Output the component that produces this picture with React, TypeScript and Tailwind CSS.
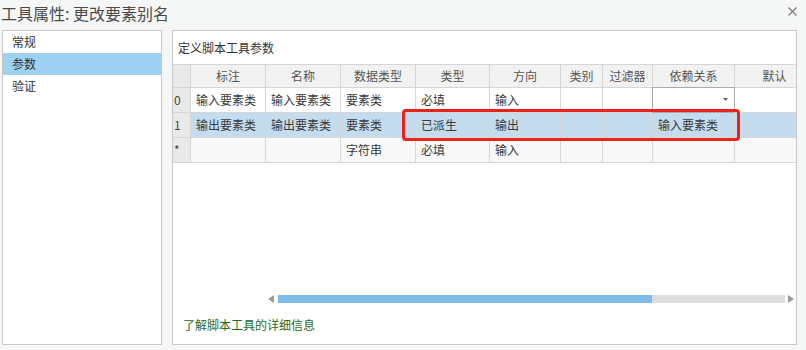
import React from 'react'

const font = "font-['Microsoft_YaHei','Noto_Sans_CJK_SC',sans-serif]"

const columns = [
  { label: '', w: 'w-[18px]' },
  { label: '标注', w: 'w-[75px]' },
  { label: '名称', w: 'w-[75px]' },
  { label: '数据类型', w: 'w-[75px]' },
  { label: '类型', w: 'w-[74px]' },
  { label: '方向', w: 'w-[71px]' },
  { label: '类别', w: 'w-[42px]' },
  { label: '过滤器', w: 'w-[50px]' },
  { label: '依赖关系', w: 'w-[82px]' },
  { label: '默认', w: 'w-[80px]' },
]

const rows = [
  { num: '0', cells: ['输入要素类', '输入要素类', '要素类', '必填', '输入', '', '', '', ''], bg: 'bg-white', dropdown: true },
  { num: '1', cells: ['输出要素类', '输出要素类', '要素类', '已派生', '输出', '', '', '输入要素类', ''], bg: 'bg-[#c5dcef]' },
  { num: '*', cells: ['', '', '字符串', '必填', '输入', '', '', '', ''], bg: 'bg-[#f8f8f8]' },
]

const HeaderRow: React.FC = () => (
  <div className="flex h-[24px] border-t border-[#d6d6d6]">
    {columns.map((col, i) => (
      <div
        key={i}
        className={`${col.w} shrink-0 border-r border-b border-[#d6d6d6] flex items-center justify-center text-[12px] text-[#555] ${i === 0 ? 'bg-[#e9e9e9]' : 'bg-[#f2f2f2]'}`}
      >
        {col.label}
      </div>
    ))}
  </div>
)

const DataRow: React.FC<{ row: (typeof rows)[number] }> = ({ row }) => (
  <div className="flex h-[25px]">
    <div className="w-[18px] shrink-0 border-r border-b border-[#d6d6d6] bg-[#e9e9e9] flex items-center pl-[1px] text-[12px] text-[#444]">
      {row.num}
    </div>
    {row.cells.map((text, i) => {
      const col = columns[i + 1]
      if (row.dropdown && i === 7) {
        return (
          <div key={i} className={`${col.w} shrink-0 border-b border-r border-[#d6d6d6] bg-white relative`}>
            <div className="absolute inset-[-1px] border border-[#ababab] bg-white">
              <svg className="absolute right-[6px] top-[10px]" width="5" height="3" viewBox="0 0 5 3">
                <path d="M0 0h5L2.5 3z" fill="#666" />
              </svg>
            </div>
          </div>
        )
      }
      return (
        <div
          key={i}
          className={`${col.w} shrink-0 border-r border-b border-[#d6d6d6] ${row.bg} flex items-center pl-[5px] text-[12px] text-[#3a3a3a] whitespace-nowrap overflow-hidden`}
        >
          {text}
        </div>
      )
    })}
  </div>
)

const App: React.FC = () => {
  return (
    <div className={`w-[806px] h-[350px] bg-[#f5f7f6] flex flex-col overflow-hidden ${font}`}>
      {/* Title bar */}
      <div className="h-[30px] flex items-center justify-between pl-[1px] pr-[9px] shrink-0">
        <span className="text-[16px] text-[#4a4a4a] leading-none pb-[4px]">工具属性: 更改要素别名</span>
        <svg width="9" height="9" viewBox="0 0 9 9" className="mb-[8px]">
          <path d="M0.5 0.5l8 8M8.5 0.5l-8 8" stroke="#777" strokeWidth="1.2" />
        </svg>
      </div>

      <div className="flex gap-[10px] pl-[2px] h-[315px]">
        {/* Left nav */}
        <div className="w-[160px] h-full bg-white border border-[#c8c8c8] pt-[0px] text-[12px] text-[#333]">
          <div className="h-[22px] flex items-center pl-[9px]">常规</div>
          <div className="h-[22px] flex items-center pl-[9px] bg-[#9fd2f2]">参数</div>
          <div className="h-[22px] flex items-center pl-[9px]">验证</div>
        </div>

        {/* Right content */}
        <div className="w-[625px] h-full bg-white border border-[#c8c8c8] relative flex flex-col overflow-hidden">
          <div className="h-[33px] flex items-center pl-[5px] text-[12px] text-[#333] shrink-0">定义脚本工具参数</div>

          <div className="w-[642px] shrink-0">
            <HeaderRow />
            {rows.map((row, i) => (
              <DataRow key={i} row={row} />
            ))}
          </div>

          {/* Horizontal scrollbar */}
          <div className="mt-auto flex items-center h-[8px] ml-[95px] mr-[2px] mb-[14px]">
            <svg width="6" height="8" viewBox="0 0 6 8" className="mr-[4px]">
              <path d="M6 0v8L0 4z" fill="#9a9a9a" />
            </svg>
            <div className="h-[8px] w-[374px] bg-[#7dbde8]" />
            <div className="h-[8px] flex-1 bg-[#dedede]" />
            <svg width="6" height="8" viewBox="0 0 6 8" className="ml-[3px]">
              <path d="M0 0v8L6 4z" fill="#9a9a9a" />
            </svg>
          </div>

          <div className="pl-[10px] pb-[11px] text-[12px] text-[#1f6b1f] leading-[16px]">了解脚本工具的详细信息</div>

          {/* Red highlight */}
          <div className="absolute left-[229px] top-[78px] w-[338px] h-[32px] border-[3px] border-[#e8231b] rounded-[4px] pointer-events-none" />
        </div>
      </div>
    </div>
  )
}

export default App
